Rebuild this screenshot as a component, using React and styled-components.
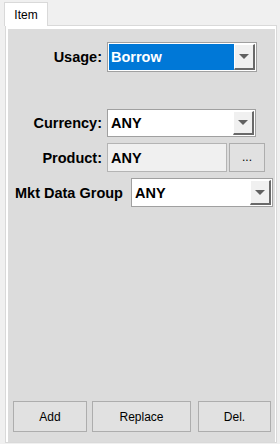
import React from 'react';
import styled, { createGlobalStyle } from 'styled-components';

const GlobalStyle = createGlobalStyle`
  html, body {
    margin: 0;
    padding: 0;
    background: #f0f0f0;
    font-family: "Liberation Sans", Arial, sans-serif;
  }
`;

const Page = styled.div`
  box-sizing: border-box;
  width: 280px;
  height: 444px;
  padding: 2px 3px 1px 4px;
  display: flex;
  flex-direction: column;
`;

const TabStrip = styled.div`
  display: flex;
  height: 23px;
`;

const Tab = styled.div`
  position: relative;
  z-index: 1;
  box-sizing: border-box;
  width: 44px;
  height: 24px;
  background: #fff;
  border: 1px solid #d9d9d9;
  border-bottom: none;
  font-size: 12px;
  color: #000;
  display: flex;
  align-items: center;
  justify-content: center;
`;

const Panel = styled.div`
  flex: 1;
  display: flex;
  margin-left: 1px;
  border: 1px solid #d9d9d9;
  background: #fff;
  padding: 3px 1px 0 2px;
`;

const Content = styled.div`
  flex: 1;
  display: flex;
  flex-direction: column;
  background: #dcdcdc;
`;

const Row = styled.div`
  display: flex;
  align-items: center;
  margin-top: ${(p) => p.$top}px;
  padding-left: ${(p) => p.$indent || 0}px;
`;

const Label = styled.div`
  box-sizing: border-box;
  width: ${(p) => p.$width}px;
  text-align: ${(p) => p.$align || 'right'};
  font-weight: bold;
  font-size: 14.5px;
  color: #000;
  margin-right: 5px;
  white-space: nowrap;
`;

const Combo = styled.div`
  box-sizing: border-box;
  width: ${(p) => p.$width}px;
  height: ${(p) => p.$height}px;
  border: 1px solid #a0a0a0;
  background: #fff;
  display: flex;
  padding: 1px;
`;

const ComboValue = styled.div`
  flex: 1;
  display: flex;
  align-items: center;
  padding-left: 2px;
  font-weight: bold;
  font-size: 14.5px;
  color: ${(p) => (p.$selected ? '#fff' : '#000')};
  background: ${(p) => (p.$selected ? '#0078d7' : 'transparent')};
`;

const DropButton = styled.div`
  box-sizing: border-box;
  width: 21px;
  background: #f0f0f0;
  border-top: 1px solid #fff;
  border-left: 1px solid #fff;
  border-right: 2px solid #696969;
  border-bottom: 2px solid #696969;
  display: flex;
  align-items: center;
  justify-content: center;
`;

const Arrow = styled.div`
  width: 0;
  height: 0;
  border-left: 5px solid transparent;
  border-right: 5px solid transparent;
  border-top: 5px solid #606060;
`;

const TextField = styled.div`
  box-sizing: border-box;
  width: 120px;
  height: 29px;
  border: 1px solid #b4b4b4;
  background: #f0f0f0;
  display: flex;
  align-items: center;
  padding-left: 3px;
  font-weight: bold;
  font-size: 14.5px;
  color: #000;
`;

const EllipsisButton = styled.div`
  box-sizing: border-box;
  width: 36px;
  height: 29px;
  margin-left: 2px;
  border: 1px solid #adadad;
  background: #e1e1e1;
  display: flex;
  align-items: center;
  justify-content: center;
  font-size: 12px;
  color: #000;
  padding-bottom: 2px;
`;

const Spacer = styled.div`
  flex: 1;
`;

const ButtonBar = styled.div`
  display: flex;
  padding: 0 4px 10px 5px;
`;

const ActionButton = styled.div`
  box-sizing: border-box;
  width: ${(p) => p.$width}px;
  height: 31px;
  margin-left: ${(p) => p.$gap || 0}px;
  border: 1px solid #adadad;
  background: #e1e1e1;
  display: flex;
  align-items: center;
  justify-content: center;
  font-size: 12px;
  color: #000;
`;

const ComboBox = ({ value, width, height, selected }) => (
  <Combo $width={width} $height={height}>
    <ComboValue $selected={selected}>{value}</ComboValue>
    <DropButton>
      <Arrow />
    </DropButton>
  </Combo>
);

export default function App() {
  return (
    <>
      <GlobalStyle />
      <Page>
        <TabStrip>
          <Tab>Item</Tab>
        </TabStrip>
        <Panel>
          <Content>
            <Row $top={13}>
              <Label $width={94}>Usage:</Label>
              <ComboBox value="Borrow" width={150} height={30} selected />
            </Row>
            <Row $top={37}>
              <Label $width={94}>Currency:</Label>
              <ComboBox value="ANY" width={149} height={28} />
            </Row>
            <Row $top={6}>
              <Label $width={94}>Product:</Label>
              <TextField>ANY</TextField>
              <EllipsisButton>...</EllipsisButton>
            </Row>
            <Row $top={6} $indent={7}>
              <Label $width={111} $align="left">Mkt Data Group</Label>
              <ComboBox value="ANY" width={142} height={29} />
            </Row>
            <Spacer />
            <ButtonBar>
              <ActionButton $width={74}>Add</ActionButton>
              <ActionButton $width={99} $gap={5}>Replace</ActionButton>
              <ActionButton $width={73} $gap={7}>Del.</ActionButton>
            </ButtonBar>
          </Content>
        </Panel>
      </Page>
    </>
  );
}
